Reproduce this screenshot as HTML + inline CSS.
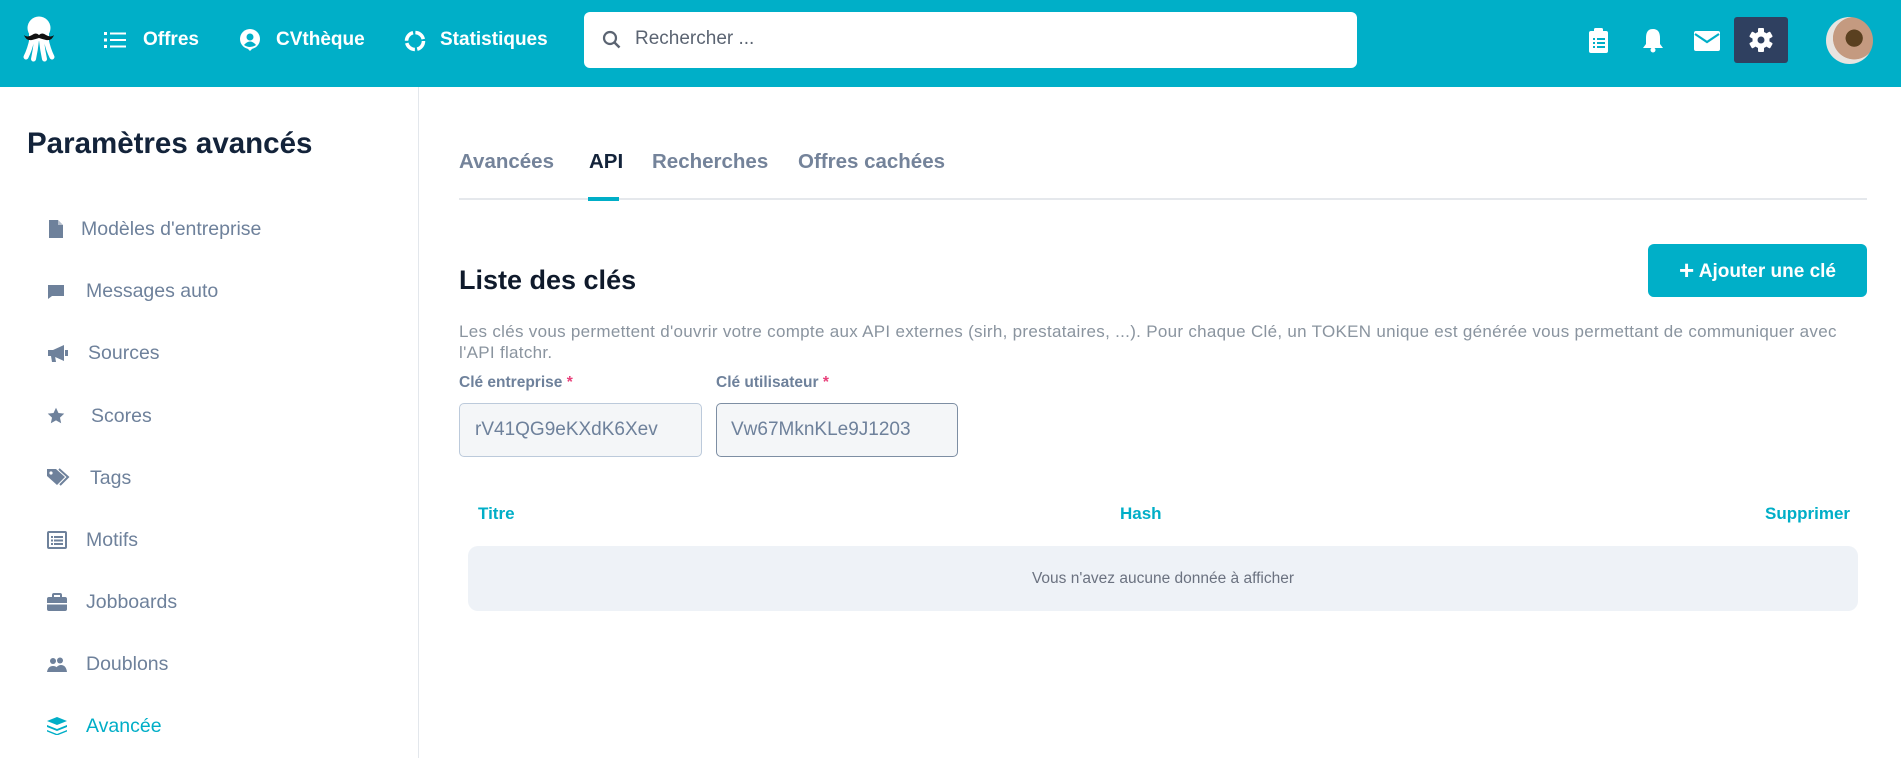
<!DOCTYPE html>
<html><head><meta charset="utf-8"><style>
*{box-sizing:border-box;margin:0;padding:0}
body{width:1901px;height:758px;overflow:hidden;background:#fff;font-family:"Liberation Sans",sans-serif;position:relative}
.hdr{position:absolute;left:0;top:0;width:1901px;height:87px;background:#00afc8}
.nav{position:absolute;top:28px;color:#fff;font-weight:bold;font-size:19px;line-height:24px}
.search{position:absolute;left:584px;top:12px;width:773px;height:56px;background:#fff;border-radius:6px}
.search span{position:absolute;left:51px;top:16px;font-size:19px;color:#5b6472}
.side{position:absolute;left:0;top:87px;width:419px;height:671px;border-right:1px solid #e3e7ec}
.st{position:absolute;left:27px;top:127px;font-size:29.5px;font-weight:bold;color:#13233a}
.it{position:absolute;font-size:19.5px;color:#6e819b;line-height:22px}
.ic{position:absolute;left:47px;width:18px;height:18px}
.tab{position:absolute;top:150px;font-size:20.5px;font-weight:bold;color:#74839a}
.abs{position:absolute}
</style></head><body>
<div class="hdr">
<svg class="abs" style="left:20px;top:14px" width="40" height="48" viewBox="0 0 40 48">
<circle cx="19" cy="14" r="11.5" fill="#fff"/>
<path d="M9 18h20v9H9z" fill="#fff"/>
<path d="M12 25q-2 10-6 18M16.5 26q-1 10-3 19M21.5 26q1 10 3 19M26 25q2 10 6 18" stroke="#fff" stroke-width="5" fill="none" stroke-linecap="round"/>
<path d="M4 21q3 3 8 0q4-3 7 0q3-3 7 0q5 3 8 0q-2 6-8 5q-4-1-7-2q-3 1-7 2q-6 1-8-5z" fill="#111"/>
</svg>
<svg class="abs" style="left:104px;top:31px" width="22" height="18" viewBox="0 0 22 18" fill="#fff"><rect x="0" y="1" width="3" height="3"/><rect x="0" y="7.5" width="3" height="3"/><rect x="0" y="14" width="3" height="3"/><rect x="6" y="1.5" width="16" height="2"/><rect x="6" y="8" width="16" height="2"/><rect x="6" y="14.5" width="16" height="2"/></svg>
<div class="nav" style="left:143px">Offres</div>
<svg class="abs" style="left:240px;top:29px" width="20" height="22" viewBox="0 0 20 22"><circle cx="10" cy="10" r="10" fill="#fff"/><circle cx="10" cy="8" r="3.5" fill="#00afc8"/><path d="M4 16q6-7 12 0q-6 4-12 0z" fill="#00afc8"/><path d="M7 19l3 3 3-3z" fill="#fff"/></svg>
<div class="nav" style="left:276px">CVthèque</div>
<svg class="abs" style="left:404px;top:30px" width="22" height="22" viewBox="0 0 22 22"><circle cx="11" cy="11" r="8.5" stroke="#fff" stroke-width="3.5" fill="none" stroke-dasharray="11 2.4"/></svg>
<div class="nav" style="left:440px">Statistiques</div>
<div class="search"><svg class="abs" style="left:18px;top:18px" width="20" height="20" viewBox="0 0 20 20"><circle cx="8" cy="8" r="6" stroke="#5b6472" stroke-width="2.2" fill="none"/><path d="M12.5 12.5l5 5" stroke="#5b6472" stroke-width="2.5"/></svg><span>Rechercher ...</span></div>
<svg class="abs" style="left:1589px;top:28px" width="20" height="25" viewBox="0 0 20 25" fill="#fff"><rect x="0" y="3" width="19" height="22" rx="2"/><rect x="5" y="0" width="9" height="6" rx="1.5"/><g fill="#00afc8"><rect x="4" y="10" width="2" height="2"/><rect x="8" y="10" width="8" height="2"/><rect x="4" y="14" width="2" height="2"/><rect x="8" y="14" width="8" height="2"/><rect x="4" y="18" width="2" height="2"/><rect x="8" y="18" width="8" height="2"/></g></svg>
<svg class="abs" style="left:1642px;top:28px" width="22" height="25" viewBox="0 0 22 25" fill="#fff"><path d="M11 1q7 0 7 9v6l3 4H1l3-4v-6q0-9 7-9z"/><circle cx="11" cy="22" r="2.5"/></svg>
<svg class="abs" style="left:1694px;top:31px" width="26" height="20" viewBox="0 0 26 20"><rect width="26" height="20" rx="2" fill="#fff"/><path d="M1 3l12 8 12-8" stroke="#00afc8" stroke-width="2.2" fill="none"/></svg>
<div class="abs" style="left:1734px;top:17px;width:54px;height:46px;background:#2f4060;border-radius:3px"></div>
<svg class="abs" style="left:1749px;top:28px" width="24" height="24" viewBox="0 0 24 24"><g fill="#fff" transform="translate(12 12)"><rect x="-3" y="-12" width="6" height="24" rx="1"/><rect x="-3" y="-12" width="6" height="24" rx="1" transform="rotate(60)"/><rect x="-3" y="-12" width="6" height="24" rx="1" transform="rotate(120)"/><circle r="8.5"/></g><circle cx="12" cy="12" r="3.5" fill="#2f4060"/></svg>
<div class="abs" style="left:1826px;top:17px;width:47px;height:47px;border-radius:50%;background:radial-gradient(circle at 60% 45%,#5a4020 0 22%,#c49a80 23% 55%,#e8e4e0 56%)"></div>
</div>
<div class="side"></div>
<div class="st">Paramètres avancés</div>
<svg class="ic" style="top:220px" viewBox="0 0 18 18"><path d="M2 0h9l5 5v13H2z" fill="#6e819b"/><path d="M11 0v5h5" fill="#fff" opacity=".5"/></svg><div class="it" style="left:81px;top:218px">Modèles d'entreprise</div>
<svg class="ic" style="top:283px" viewBox="0 0 18 18"><path d="M1 2h16v11H5l-4 3z" fill="#6e819b"/></svg><div class="it" style="left:86px;top:280px">Messages auto</div>
<svg class="ic" style="top:344px;width:22px" viewBox="0 0 22 18"><path d="M1 6h5l11-5v16L6 12H1z M4 12h4l1 6H5z" fill="#6e819b"/><rect x="18" y="6" width="3" height="6" fill="#6e819b"/></svg><div class="it" style="left:88px;top:342px">Sources</div>
<svg class="ic" style="top:407px" viewBox="0 0 24 24"><path d="M12 1l3.3 7 7.7.9-5.7 5.2 1.6 7.6L12 17.8 5.1 21.7l1.6-7.6L1 8.9 8.7 8z" fill="#6e819b"/></svg><div class="it" style="left:91px;top:405px">Scores</div>
<svg class="ic" style="top:468px;width:24px" viewBox="0 0 24 18"><path d="M0 1h9l9 8-8 8L0 8z" fill="#6e819b"/><circle cx="4" cy="5" r="1.6" fill="#fff"/><path d="M12 1l9 8-8 8" stroke="#6e819b" stroke-width="2" fill="none"/></svg><div class="it" style="left:90px;top:467px">Tags</div>
<svg class="ic" style="top:531px;width:20px" viewBox="0 0 20 18"><rect x="1" y="1" width="18" height="16" rx="1" stroke="#6e819b" stroke-width="2" fill="none"/><g fill="#6e819b"><rect x="4" y="5" width="2" height="2"/><rect x="7" y="5" width="9" height="2"/><rect x="4" y="8.5" width="2" height="2"/><rect x="7" y="8.5" width="9" height="2"/><rect x="4" y="12" width="2" height="2"/><rect x="7" y="12" width="9" height="2"/></g></svg><div class="it" style="left:86px;top:529px">Motifs</div>
<svg class="ic" style="top:593px;width:20px" viewBox="0 0 20 18"><rect x="0" y="4" width="20" height="14" rx="2" fill="#6e819b"/><rect x="6" y="1" width="8" height="4" rx="1" stroke="#6e819b" stroke-width="2" fill="none"/><rect x="0" y="10" width="20" height="1.5" fill="#fff"/></svg><div class="it" style="left:86px;top:591px">Jobboards</div>
<svg class="ic" style="top:656px;width:20px" viewBox="0 0 20 16" fill="#6e819b"><circle cx="6" cy="4" r="3"/><circle cx="13" cy="3.5" r="3"/><path d="M0 15q1-6 6-6t6 6z M8 15q1-7 6-7t6 7z"/></svg><div class="it" style="left:86px;top:653px">Doublons</div>
<svg class="ic" style="top:717px;width:20px" viewBox="0 0 20 18" fill="#00aec7"><path d="M10 0l10 4-10 4L0 4z"/><path d="M0 8l10 4 10-4v2l-10 4L0 10z"/><path d="M0 13l10 4 10-4v1.5l-10 4-10-4z"/></svg><div class="it" style="left:86px;top:715px;color:#00aec7">Avancée</div>

<div class="tab" style="left:459px">Avancées</div>
<div class="tab" style="left:589px;color:#13233a">API</div>
<div class="tab" style="left:652px">Recherches</div>
<div class="tab" style="left:798px">Offres cachées</div>
<div class="abs" style="left:459px;top:198px;width:1408px;height:2px;background:#e5e8ec"></div>
<div class="abs" style="left:588px;top:197px;width:31px;height:4px;background:#00aec7"></div>
<div class="abs" style="left:459px;top:265px;font-size:27px;font-weight:bold;color:#0f1a2b">Liste des clés</div>
<div class="abs" style="left:1648px;top:244px;width:219px;height:53px;background:#00afc8;border-radius:6px;color:#fff;font-weight:bold;font-size:19px;line-height:53px;text-align:center"><span style="font-size:26px;vertical-align:-2px">+</span> Ajouter une clé</div>
<div class="abs" style="left:459px;top:321px;width:1430px;font-size:17px;letter-spacing:0.3px;line-height:21px;color:#8a949f;white-space:nowrap">Les clés vous permettent d'ouvrir votre compte aux API externes (sirh, prestataires, ...). Pour chaque Clé, un TOKEN unique est générée vous permettant de communiquer avec<br>l'API flatchr.</div>
<div class="abs" style="left:459px;top:374px;font-size:15.5px;font-weight:bold;color:#6e819b">Clé entreprise <span style="color:#e8407a">*</span></div>
<div class="abs" style="left:716px;top:374px;font-size:15.5px;font-weight:bold;color:#6e819b">Clé utilisateur <span style="color:#e8407a">*</span></div>
<div class="abs" style="left:459px;top:403px;width:243px;height:54px;background:#f4f6f8;border:1px solid #bccadb;border-radius:5px;font-size:19px;color:#6e819b;padding:15px 0 0 15px">rV41QG9eKXdK6Xev</div>
<div class="abs" style="left:716px;top:403px;width:242px;height:54px;background:#f4f6f8;border:1px solid #7d8ea3;border-radius:5px;font-size:19px;color:#6e819b;padding:15px 0 0 14px">Vw67MknKLe9J1203</div>
<div class="abs" style="left:478px;top:504px;font-size:17px;font-weight:bold;color:#00aec7">Titre</div>
<div class="abs" style="left:1120px;top:504px;font-size:17px;font-weight:bold;color:#00aec7">Hash</div>
<div class="abs" style="left:1765px;top:504px;font-size:17px;font-weight:bold;color:#00aec7">Supprimer</div>
<div class="abs" style="left:468px;top:546px;width:1390px;height:65px;background:#eef2f7;border-radius:10px;text-align:center;font-size:15.5px;color:#6b7280;line-height:65px">Vous n'avez aucune donnée à afficher</div>
</body></html>
